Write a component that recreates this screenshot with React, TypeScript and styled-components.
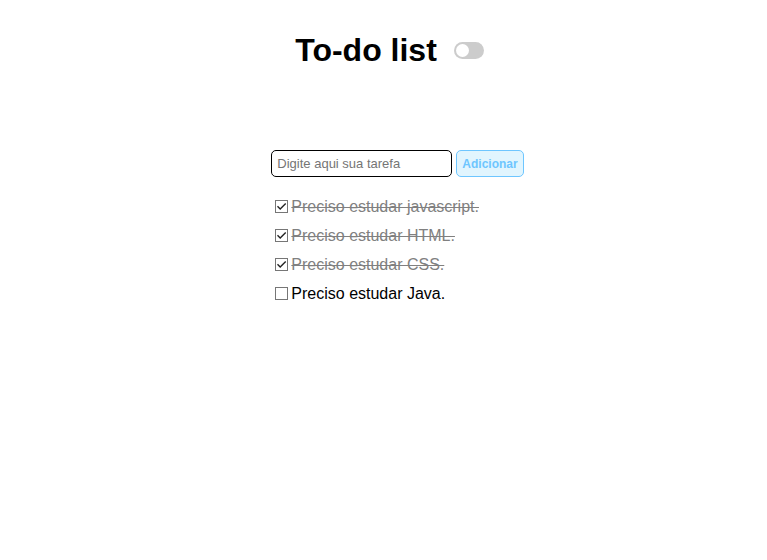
import React, { useState } from "react";
import styled, { createGlobalStyle } from "styled-components";

const GlobalStyle = createGlobalStyle`
  * { box-sizing: border-box; }
  body {
    margin: 0;
    background: #fff;
    color: #000;
    font: 16px/19px "Liberation Sans", Arial, sans-serif;
  }
`;

const Page = styled.main`
  display: flex;
  flex-direction: column;
  align-items: center;
  gap: 78px;
  padding: 28px 0 28px 12px;
`;

const Header = styled.header`
  display: flex;
  align-items: center;
  gap: 17px;
`;

const Title = styled.h1`
  margin: 0;
  font-size: 32px;
  line-height: 44px;
  font-weight: 700;
`;

const Switch = styled.input`
  appearance: none;
  display: flex;
  align-items: center;
  width: 30px;
  height: 17px;
  margin: 0;
  padding: 0 2px;
  border-radius: 17px;
  background: #ccc;
  cursor: pointer;

  &::before {
    content: "";
    width: 13px;
    height: 13px;
    border-radius: 50%;
    background: #fff;
  }
  &:checked {
    justify-content: flex-end;
    background: #2196f3;
  }
`;

const Panel = styled.section`
  display: flex;
  flex-direction: column;
  gap: 20px;
`;

const Form = styled.form`
  display: flex;
  gap: 4px;
  margin-left: 16px;
`;

const TaskInput = styled.input`
  width: 181px;
  height: 27px;
  padding: 5px;
  border: 1px solid #000;
  border-radius: 5px;
  background: #fff;
  font: 13px "Liberation Sans", Arial, sans-serif;

  &::placeholder { color: #757575; }
`;

const AddButton = styled.button`
  height: 27px;
  padding: 0 5px;
  border: 1px solid #6ec6ff;
  border-radius: 5px;
  background: #e1f5fe;
  color: #6ec6ff;
  font: 700 12px "Liberation Sans", Arial, sans-serif;
  cursor: pointer;
`;

const List = styled.ul`
  display: grid;
  gap: 10px;
  margin: 0;
  padding: 0 0 0 20px;
  list-style: none;
`;

const Item = styled.li`
  display: flex;
  align-items: center;
  gap: 3px;
`;

const Check = styled.input`
  appearance: none;
  grid-area: 1 / 1;
  width: 13px;
  height: 13px;
  margin: 0;
  border: 1px solid #767676;
  background: #fff;
`;

const CheckBox = styled.span`
  display: grid;
  place-items: center;
`;

const Tick = styled.svg`
  grid-area: 1 / 1;
  width: 13px;
  height: 13px;
  pointer-events: none;
`;

const Label = styled.label<{ $done: boolean }>`
  color: ${({ $done }) => ($done ? "#808080" : "#000")};
  text-decoration: ${({ $done }) => ($done ? "line-through" : "none")};
`;

type Task = { text: string; done: boolean };

const initialTasks: Task[] = [
  { text: "Preciso estudar javascript.", done: true },
  { text: "Preciso estudar HTML.", done: true },
  { text: "Preciso estudar CSS.", done: true },
  { text: "Preciso estudar Java.", done: false },
];

export default function App() {
  const [tasks, setTasks] = useState(initialTasks);
  const [draft, setDraft] = useState("");

  const addTask = (event: React.FormEvent) => {
    event.preventDefault();
    if (!draft.trim()) return;
    setTasks([...tasks, { text: draft.trim(), done: false }]);
    setDraft("");
  };

  const toggle = (index: number) =>
    setTasks(tasks.map((task, i) => (i === index ? { ...task, done: !task.done } : task)));

  return (
    <Page>
      <GlobalStyle />
      <Header>
        <Title>To-do list</Title>
        <Switch type="checkbox" role="switch" aria-label="Tema escuro" />
      </Header>
      <Panel>
        <Form onSubmit={addTask}>
          <TaskInput
            type="text"
            aria-label="Tarefa"
            placeholder="Digite aqui sua tarefa"
            value={draft}
            onChange={(event) => setDraft(event.target.value)}
          />
          <AddButton type="submit">Adicionar</AddButton>
        </Form>
        <List>
          {tasks.map((task, index) => (
            <Item key={index}>
              <CheckBox>
                <Check
                  id={`task-${index}`}
                  type="checkbox"
                  checked={task.done}
                  onChange={() => toggle(index)}
                />
                {task.done && (
                  <Tick viewBox="0 0 13 13" aria-hidden="true">
                    <path d="M2.5 6.3 5.2 9 10.7 3.5" fill="none" stroke="#222" strokeWidth="1.4" />
                  </Tick>
                )}
              </CheckBox>
              <Label htmlFor={`task-${index}`} $done={task.done}>
                {task.text}
              </Label>
            </Item>
          ))}
        </List>
      </Panel>
    </Page>
  );
}
